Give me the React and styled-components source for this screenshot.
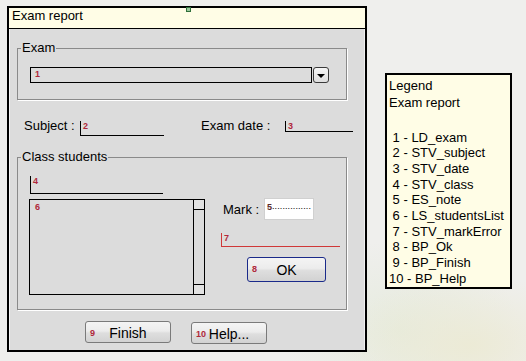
import styled, { createGlobalStyle } from "styled-components";

const GlobalStyle = createGlobalStyle`
  html, body { margin: 0; padding: 0; }
  body {
    width: 526px;
    height: 361px;
    overflow: hidden;
    font-family: "Liberation Sans", Arial, sans-serif;
    font-size: 13px;
    color: #000;
    background:
      radial-gradient(ellipse 130px 70px at 470px 345px, rgba(236, 234, 212, 0.9), rgba(236, 234, 212, 0)),
      radial-gradient(ellipse 120px 90px at 400px 330px, rgba(228, 234, 218, 0.8), rgba(228, 234, 218, 0)),
      #efefed;
  }
`;

const Page = styled.div`
  display: flex;
  align-items: flex-start;
  padding: 6px 0 0 7px;
`;

const Dialog = styled.div`
  position: relative;
  width: 360px;
  height: 346px;
  box-sizing: border-box;
  border: 2px solid #000;
  display: flex;
  flex-direction: column;
`;

const Handle = styled.span`
  position: absolute;
  top: -1px;
  left: 177px;
  width: 3px;
  height: 3px;
  background: #9cc79c;
  border: 1px solid #2f6f3a;
`;

const TitleBar = styled.div`
  flex: none;
  height: 20px;
  line-height: 16px;
  padding-left: 3px;
  background: #fffde6;
  border-bottom: 1px solid #000;
`;

const Body = styled.div`
  flex: 1;
  background: #dcdcdc;
  box-shadow: inset 1px 0 0 #f4f4f4, inset -1px 0 0 #f0f0f0;
`;

const Group = styled.fieldset`
  margin: ${(p) => p.$top}px 0 0 8px;
  width: 330px;
  box-sizing: border-box;
  padding: 0;
  min-width: 0;
  border: 1px solid #8a8a8a;
  box-shadow: 1px 1px 0 #fff;
`;

const GroupTitle = styled.legend`
  margin-left: 3px;
  padding: 0 1px 2px;
  line-height: 15px;
`;

const ComboRow = styled.div`
  display: flex;
  gap: 1px;
  padding: 10px 0 16px 12px;
`;

const ComboInput = styled.div`
  width: 282px;
  height: 16px;
  box-sizing: border-box;
  border: 1px solid #000;
  padding: 2px 0 0 4px;
`;

const ComboButton = styled.div`
  width: 16px;
  height: 16px;
  box-sizing: border-box;
  border: 1px solid #3a3a3a;
  border-radius: 3px;
  background: linear-gradient(#f6f6f6, #dedede);
  display: flex;
  align-items: center;
  justify-content: center;

  &::after {
    content: "";
    border-left: 4px solid transparent;
    border-right: 4px solid transparent;
    border-top: 4px solid #000;
    margin-top: 1px;
  }
`;

const Tag = styled.span`
  display: block;
  font: bold 9px/8px "Liberation Sans", Arial, sans-serif;
  color: ${(p) => p.$dark ? "#5a2a2a" : "#b0283a"};
`;

const InfoRow = styled.div`
  display: flex;
  align-items: flex-start;
  margin-top: 19px;
`;

const Label = styled.span`
  flex: none;
  width: ${(p) => p.$w}px;
  margin-left: ${(p) => p.$ml || 0}px;
  line-height: 13px;
`;

const Field = styled.div`
  flex: none;
  width: ${(p) => p.$w}px;
  height: ${(p) => p.$h}px;
  margin-top: ${(p) => p.$mt || 0}px;
  margin-left: ${(p) => p.$ml || 0}px;
  box-sizing: border-box;
  border-left: 1px solid ${(p) => p.$color || "#000"};
  border-bottom: 1px solid ${(p) => p.$color || "#000"};
  padding: 1px 0 0 2px;
`;

const ClassBody = styled.div`
  display: flex;
  padding: 10px 0 14px 11px;
`;

const LeftCol = styled.div`
  width: 176px;
  display: flex;
  flex-direction: column;
`;

const RightCol = styled.div`
  margin-left: 16px;
  display: flex;
  flex-direction: column;
  align-items: flex-start;
`;

const ListBox = styled.div`
  margin-top: 5px;
  height: 96px;
  box-sizing: border-box;
  border: 1px solid #000;
  display: flex;
`;

const ListArea = styled.div`
  flex: 1;
  padding: 3px 0 0 5px;
`;

const ScrollBar = styled.div`
  width: 10px;
  border-left: 1px solid #000;
  display: flex;
  flex-direction: column;
  justify-content: space-between;
`;

const ScrollStep = styled.div`
  height: 9px;
  background: #e2e2e2;
  border-${(p) => p.$edge}: 1px solid #000;
`;

const MarkRow = styled.div`
  display: flex;
  align-items: center;
  margin-top: 22px;
`;

const MarkInput = styled.div`
  width: 50px;
  height: 22px;
  box-sizing: border-box;
  background: #fff;
  border: 1px solid #d0d0d0;
  padding: 4px 0 0 2px;
  display: flex;
  align-items: flex-start;
`;

const Dots = styled.span`
  font-size: 9px;
  line-height: 6px;
  letter-spacing: 0.1px;
`;

const Button = styled.div`
  position: relative;
  flex: none;
  width: ${(p) => p.$w}px;
  height: ${(p) => p.$h}px;
  margin-top: ${(p) => p.$mt || 0}px;
  margin-left: ${(p) => p.$ml || 0}px;
  box-sizing: border-box;
  border: 1px solid ${(p) => p.$accent ? "#1a2a8a" : "#7a7a7a"};
  border-radius: 3px;
  background: linear-gradient(#f4f4f4, #ececec 45%, #dedede 55%, #d2d2d2);
  display: flex;
  align-items: center;
  justify-content: center;
  font-size: 14px;
  padding-top: 1px;

  & > ${Tag} {
    position: absolute;
    left: 4px;
    top: 7px;
  }
`;

const ButtonRow = styled.div`
  display: flex;
  align-items: flex-start;
  gap: 20px;
  margin-top: 11px;
  padding-left: 76px;
`;

const LegendBox = styled.div`
  margin: 67px 0 0 18px;
  width: 127px;
  height: 216px;
  box-sizing: border-box;
  border: 2px solid #000;
  background: #fffde6;
  padding: 2px 0 0 2px;
`;

const LegendHead = styled.div`
  line-height: 17px;
`;

const LegendList = styled.div`
  margin-top: 18.5px;
  line-height: 15.7px;
  white-space: pre;
`;

const legendItems = [
  " 1 - LD_exam",
  " 2 - STV_subject",
  " 3 - STV_date",
  " 4 - STV_class",
  " 5 - ES_note",
  " 6 - LS_studentsList",
  " 7 - STV_markError",
  " 8 - BP_Ok",
  " 9 - BP_Finish",
  "10 - BP_Help",
];

const App = () => {
  return (
    <Page>
      <GlobalStyle />
      <Dialog>
        <Handle />
        <TitleBar>Exam report</TitleBar>
        <Body>
          <Group $top={11}>
            <GroupTitle>Exam</GroupTitle>
            <ComboRow>
              <ComboInput>
                <Tag>1</Tag>
              </ComboInput>
              <ComboButton />
            </ComboRow>
          </Group>

          <InfoRow>
            <Label $w={56} $ml={15}>Subject :</Label>
            <Field $w={84} $h={15} $mt={2}>
              <Tag>2</Tag>
            </Field>
            <Label $w={84} $ml={37}>Exam date :</Label>
            <Field $w={68} $h={11} $mt={2}>
              <Tag>3</Tag>
            </Field>
          </InfoRow>

          <Group $top={13}>
            <GroupTitle>Class students</GroupTitle>
            <ClassBody>
              <LeftCol>
                <Field $w={133} $h={18} $ml={1}>
                  <Tag>4</Tag>
                </Field>
                <ListBox>
                  <ListArea>
                    <Tag>6</Tag>
                  </ListArea>
                  <ScrollBar>
                    <ScrollStep $edge="bottom" />
                    <ScrollStep $edge="top" />
                  </ScrollBar>
                </ListBox>
              </LeftCol>
              <RightCol>
                <MarkRow>
                  <Label $w={41} $ml={2}>Mark :</Label>
                  <MarkInput>
                    <Tag $dark>5</Tag>
                    <Dots>...............</Dots>
                  </MarkInput>
                </MarkRow>
                <Field $w={119} $h={14} $mt={13} $color="#d03838">
                  <Tag>7</Tag>
                </Field>
                <Button $w={79} $h={25} $mt={10} $ml={26} $accent>
                  <Tag>8</Tag>
                  OK
                </Button>
              </RightCol>
            </ClassBody>
          </Group>

          <ButtonRow>
            <Button $w={86} $h={22}>
              <Tag>9</Tag>
              Finish
            </Button>
            <Button $w={76} $h={22} $mt={1}>
              <Tag>10</Tag>
              Help...
            </Button>
          </ButtonRow>
        </Body>
      </Dialog>

      <LegendBox>
        <LegendHead>
          Legend
          <br />
          Exam report
        </LegendHead>
        <LegendList>
          {legendItems.map((item) => (
            <div key={item}>{item}</div>
          ))}
        </LegendList>
      </LegendBox>
    </Page>
  );
};

export default App;
